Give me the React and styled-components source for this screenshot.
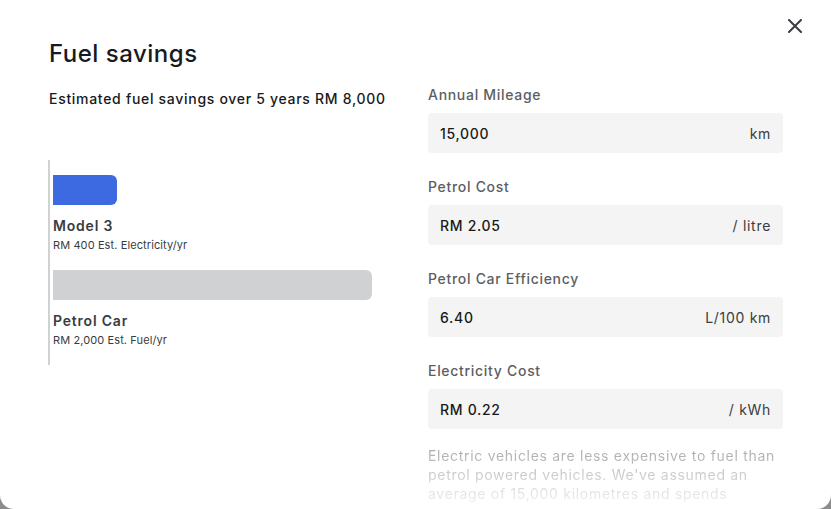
import React from 'react'
import styled, { createGlobalStyle } from 'styled-components';

const GlobalStyle = createGlobalStyle`
  html, body {
    margin: 0;
    padding: 0;
    background: #8c8c8c;
    overflow: hidden;
  }
  * { box-sizing: border-box; }
`;

const Modal = styled.div`
  position: relative;
  width: 831px;
  height: 509px;
  background: #fff;
  border-radius: 0 0 14px 14px;
  overflow: hidden;
  padding: 38px 48px 0 49px;
  font-family: Inter, "Noto Sans", sans-serif;
  letter-spacing: 0.7px;
  color: #171a20;
`;

const Close = styled.button`
  position: absolute;
  top: 16px;
  right: 26px;
  width: 20px;
  height: 20px;
  padding: 0;
  border: none;
  background: none;
  display: flex;
  align-items: center;
  justify-content: center;
  color: #393c41;
`;

const Title = styled.h1`
  margin: 0;
  font-size: 24px;
  font-weight: 500;
  line-height: 32px;
  letter-spacing: 0.5px;
`;

const Columns = styled.div`
  display: grid;
  grid-template-columns: 355px 355px;
  column-gap: 24px;
  margin-top: 15px;
`;

const Subtitle = styled.p`
  margin: 4px 0 0;
  font-size: 14px;
  font-weight: 500;
  line-height: 20px;
  color: #171a20;
`;

const Chart = styled.div`
  margin-top: 51px;
  margin-left: -1px;
  border-left: 2px solid #d0d1d2;
  padding: 15px 0 16px 3px;
  display: flex;
  flex-direction: column;
  gap: 16px;
`;

const Entry = styled.div`
  display: flex;
  flex-direction: column;
`;

const Bar = styled.div`
  height: 30px;
  background: ${({ $color }) => $color};
  border-radius: 0 6px 6px 0;
  margin-bottom: 11px;
`;

const EntryName = styled.div`
  font-size: 14px;
  font-weight: 600;
  line-height: 20px;
  letter-spacing: 0.8px;
  color: #393c41;
`;

const EntryValue = styled.div`
  font-size: 11px;
  line-height: 18px;
  letter-spacing: 0.1px;
  color: #393c41;
`;

const Form = styled.div`
  display: flex;
  flex-direction: column;
  gap: 24px;
`;

const Field = styled.div`
  display: flex;
  flex-direction: column;
  gap: 8px;
`;

const Label = styled.label`
  font-size: 14px;
  font-weight: 500;
  line-height: 20px;
  color: #5c5e62;
`;

const InputBox = styled.div`
  height: 40px;
  background: #f4f4f4;
  border-radius: 4px;
  padding: 0 12px;
  display: flex;
  align-items: center;
  justify-content: space-between;
  font-size: 14px;
`;

const Value = styled.span`
  font-weight: 500;
  color: #171a20;
`;

const Unit = styled.span`
  color: #393c41;
`;

const Note = styled.p`
  margin: -7px 0 0;
  font-size: 14px;
  line-height: 19px;
  color: #5c5e62;
  -webkit-mask-image: linear-gradient(to bottom, rgba(0,0,0,0.55) 0%, rgba(0,0,0,0.2) 75%, rgba(0,0,0,0.1) 100%);
  mask-image: linear-gradient(to bottom, rgba(0,0,0,0.55) 0%, rgba(0,0,0,0.2) 75%, rgba(0,0,0,0.1) 100%);
`;

const fields = [
  { label: 'Annual Mileage', value: '15,000', unit: 'km' },
  { label: 'Petrol Cost', value: 'RM 2.05', unit: '/ litre' },
  { label: 'Petrol Car Efficiency', value: '6.40', unit: 'L/100 km' },
  { label: 'Electricity Cost', value: 'RM 0.22', unit: '/ kWh' },
];

const cars = [
  { name: 'Model 3', cost: 'RM 400 Est. Electricity/yr', width: 64, color: '#3e6ae1' },
  { name: 'Petrol Car', cost: 'RM 2,000 Est. Fuel/yr', width: 319, color: '#d0d1d2' },
];

export default function App() {
  return (
    <>
      <GlobalStyle />
      <Modal>
        <Close aria-label="Close">
          <svg width="14" height="14" viewBox="0 0 14 14" fill="none">
            <path d="M1 1L13 13M13 1L1 13" stroke="currentColor" strokeWidth="2" strokeLinecap="round" />
          </svg>
        </Close>
        <Title>Fuel savings</Title>
        <Columns>
          <div>
            <Subtitle>Estimated fuel savings over 5 years RM 8,000</Subtitle>
            <Chart>
              {cars.map((c) => (
                <Entry key={c.name}>
                  <Bar $color={c.color} style={{ width: c.width }} />
                  <EntryName>{c.name}</EntryName>
                  <EntryValue>{c.cost}</EntryValue>
                </Entry>
              ))}
            </Chart>
          </div>
          <Form>
            {fields.map((f) => (
              <Field key={f.label}>
                <Label>{f.label}</Label>
                <InputBox>
                  <Value>{f.value}</Value>
                  <Unit>{f.unit}</Unit>
                </InputBox>
              </Field>
            ))}
            <Note>
              Electric vehicles are less expensive to fuel than petrol powered vehicles. We've assumed an average of 15,000 kilometres and spends
            </Note>
          </Form>
        </Columns>
      </Modal>
    </>
  )
}
